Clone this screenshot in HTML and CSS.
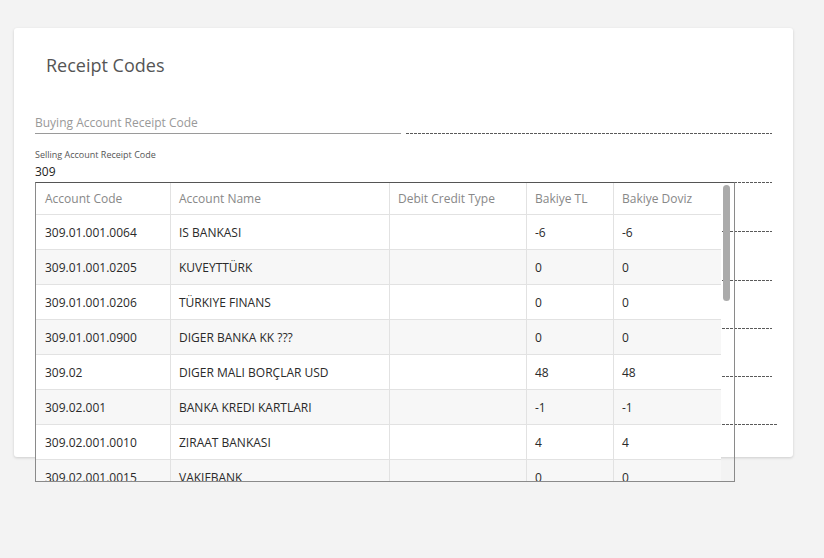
FILE: index.html
```html
<!DOCTYPE html>
<html>
<head>
<meta charset="utf-8">
<link rel="stylesheet" href="styles.css">
</head>
<body>
<div class="page">
  <div class="card">
    <h1 class="title">Receipt Codes</h1>
    <div class="fields">
      <div class="field">
        <span class="placeholder">Buying Account Receipt Code</span>
      </div>
      <div class="field disabled"></div>

      <div class="field filled">
        <span class="small-label">Selling Account Receipt Code</span>
        <span class="value">309</span>
        <div class="dropdown">
          <div class="table-wrap">
            <table class="grid">
              <colgroup>
                <col class="c1"><col class="c2"><col class="c3"><col class="c4"><col class="c5">
              </colgroup>
              <thead>
                <tr><th>Account Code</th><th>Account Name</th><th>Debit Credit Type</th><th>Bakiye TL</th><th>Bakiye Doviz</th></tr>
              </thead>
              <tbody>
                <tr><td>309.01.001.0064</td><td>IS BANKASI</td><td></td><td>-6</td><td>-6</td></tr>
                <tr><td>309.01.001.0205</td><td>KUVEYTTÜRK</td><td></td><td>0</td><td>0</td></tr>
                <tr><td>309.01.001.0206</td><td>TÜRKIYE FINANS</td><td></td><td>0</td><td>0</td></tr>
                <tr><td>309.01.001.0900</td><td>DIGER BANKA KK ???</td><td></td><td>0</td><td>0</td></tr>
                <tr><td>309.02</td><td>DIGER MALI BORÇLAR USD</td><td></td><td>48</td><td>48</td></tr>
                <tr><td>309.02.001</td><td>BANKA KREDI KARTLARI</td><td></td><td>-1</td><td>-1</td></tr>
                <tr><td>309.02.001.0010</td><td>ZIRAAT BANKASI</td><td></td><td>4</td><td>4</td></tr>
                <tr><td>309.02.001.0015</td><td>VAKIFBANK</td><td></td><td>0</td><td>0</td></tr>
              </tbody>
            </table>
          </div>
          <div class="track"><div class="thumb"></div></div>
        </div>
      </div>
      <div class="field disabled"></div>

      <div class="field"></div>
      <div class="field disabled"></div>
      <div class="field"></div>
      <div class="field disabled"></div>
      <div class="field short"></div>
      <div class="field disabled short"></div>
      <div class="field short"></div>
      <div class="field disabled short"></div>
      <div class="field short"></div>
      <div class="field disabled wide short"></div>
    </div>
  </div>
</div>
</body>
</html>
```

FILE: styles.css
```css
html, body {
  margin: 0;
  padding: 0;
  background: #f3f3f3;
  font-family: "Open Sans", "Liberation Sans", sans-serif;
}

.page {
  padding: 28px 0 0 14px;
  height: 530px;
}

.card {
  width: 779px;
  box-sizing: border-box;
  background: #fff;
  border-radius: 3px;
  box-shadow: 0 1px 3px rgba(0, 0, 0, 0.16);
  padding: 0 21px 32px 21px;
}

.title {
  margin: 0;
  padding: 25px 0 0 11px;
  height: 32px;
  font-size: 18px;
  line-height: 24px;
  font-weight: 400;
  color: #555;
}

.fields {
  display: grid;
  grid-template-columns: 366px 366px;
  column-gap: 5px;
}

.field {
  position: relative;
  height: 48px;
  display: flex;
  flex-direction: column;
  justify-content: flex-end;
  border-bottom: 1px solid #9a9a9a;
}

.field.short {
  height: 47px;
}

.field.disabled {
  border-bottom: none;
  height: 49px;
  background-image: repeating-linear-gradient(to right, #5a5a5a 0 3px, transparent 3px 4px);
  background-size: 100% 1px;
  background-position: left bottom;
  background-repeat: no-repeat;
}

.field.disabled.short {
  height: 48px;
}

.field.wide {
  background-size: calc(100% + 5px) 1px;
  margin-right: -5px;
}

.placeholder {
  font-size: 12px;
  line-height: 16px;
  color: #999;
  padding-bottom: 2px;
}

.small-label {
  font-size: 9px;
  line-height: 12px;
  color: #555;
  margin-bottom: 3px;
}

.value {
  font-size: 12px;
  line-height: 16px;
  color: #222;
  padding-bottom: 2px;
}

.dropdown {
  position: absolute;
  top: 100%;
  left: 0;
  width: 700px;
  height: 300px;
  box-sizing: border-box;
  border: 1px solid #8a8a8a;
  border-top-color: #555;
  display: flex;
  z-index: 5;
}

.table-wrap {
  width: 685px;
  overflow: hidden;
  background: #fff;
}

.grid {
  width: 685px;
  table-layout: fixed;
  border-collapse: separate;
  border-spacing: 0;
  font-size: 12px;
}

.c1 { width: 134px; }
.c2 { width: 219px; }
.c3 { width: 137px; }
.c4 { width: 87px; }
.c5 { width: 108px; }

.grid th,
.grid td {
  text-align: left;
  padding: 0 8px;
  border-bottom: 1px solid #e2e2e2;
  border-left: 1px solid #e2e2e2;
  white-space: nowrap;
  overflow: hidden;
}

.grid th:first-child,
.grid td:first-child {
  border-left: none;
  padding-left: 9px;
}

.grid th {
  height: 31px;
  font-weight: 400;
  color: #888;
}

.grid td {
  height: 34px;
  color: #2a2a2a;
}

.grid tbody tr:nth-child(even) td {
  background: #f7f7f7;
}

.track {
  width: 13px;
  position: relative;
}

.thumb {
  position: absolute;
  top: 2px;
  left: 2px;
  width: 7px;
  height: 116px;
  border-radius: 4px;
  background: #ababab;
}
```
